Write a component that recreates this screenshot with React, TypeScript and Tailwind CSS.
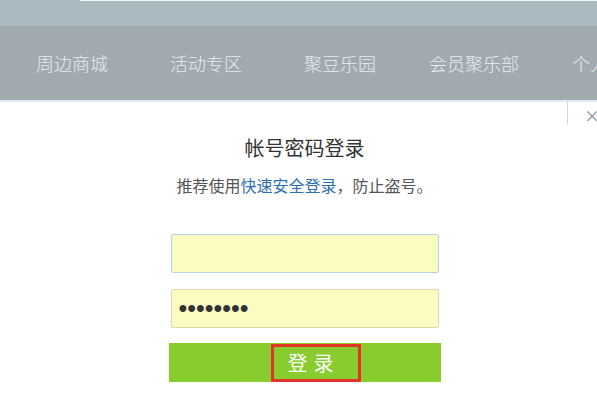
import React from "react";

const font = { fontFamily: '"Microsoft YaHei", "Noto Sans CJK SC", sans-serif' };

export default function App() {
  const nav = ["周边商城", "活动专区", "聚豆乐园", "会员聚乐部", "个人中心"];
  return (
    <div className="w-[597px] h-[399px] overflow-hidden bg-white relative" style={font}>
      <div className="h-[26px] bg-[#a9bbc1] relative">
        <div className="absolute left-[80px] right-0 top-0 h-[1px] bg-[#eef3f5]" />
      </div>
      <div className="h-[74px] bg-[#a0aaaf] flex items-center whitespace-nowrap">
        <div className="flex pl-[5px] text-[18px] font-light text-[#e8edf0]">
          {nav.map((n) => (
            <span key={n} className="inline-block w-[134px] shrink-0 text-center">{n}</span>
          ))}
        </div>
      </div>
      <div className="h-[2px] bg-[#e4e9ee]" />
      <div className="absolute left-[567px] top-[101px] w-[1px] h-[24px] bg-[#d8d8d8]" />
      <div className="absolute left-[584px] top-[107px] text-[#888] text-[16px] leading-[16px]">×</div>
      <div className="flex flex-col items-center">
        <div className="mt-[32px] text-[20px] leading-[28px] text-[#333] pl-[12px]">帐号密码登录</div>
        <div className="mt-[12px] text-[16px] leading-[22px] text-[#555] pl-[12px]">
          推荐使用<span className="text-[#2d6db3]">快速安全登录</span>，防止盗号。
        </div>
        <div className="mt-[38px] w-[268px] h-[39px] ml-[12px] bg-[#fafcc2] border border-[#b4d3e0] rounded-[2px]" />
        <div className="mt-[16px] w-[268px] h-[39px] ml-[12px] bg-[#fafcc2] border border-[#dadcb0] rounded-[2px] flex items-center pl-[7px] text-[#333] text-[25px] leading-none" style={{ fontFamily: '"Liberation Sans", Arial, sans-serif' }}>
          ••••••••
        </div>
        <div className="mt-[15px] w-[272px] h-[39px] ml-[12px] bg-[#88cc2e] flex justify-center">
          <div className="ml-[22px] mt-[1px] w-[90px] h-[38px] border-[3px] border-[#e5332a] flex items-center justify-center text-white text-[20px] tracking-[6px] pr-[4px]">
            登录
          </div>
        </div>
      </div>
    </div>
  );
}
